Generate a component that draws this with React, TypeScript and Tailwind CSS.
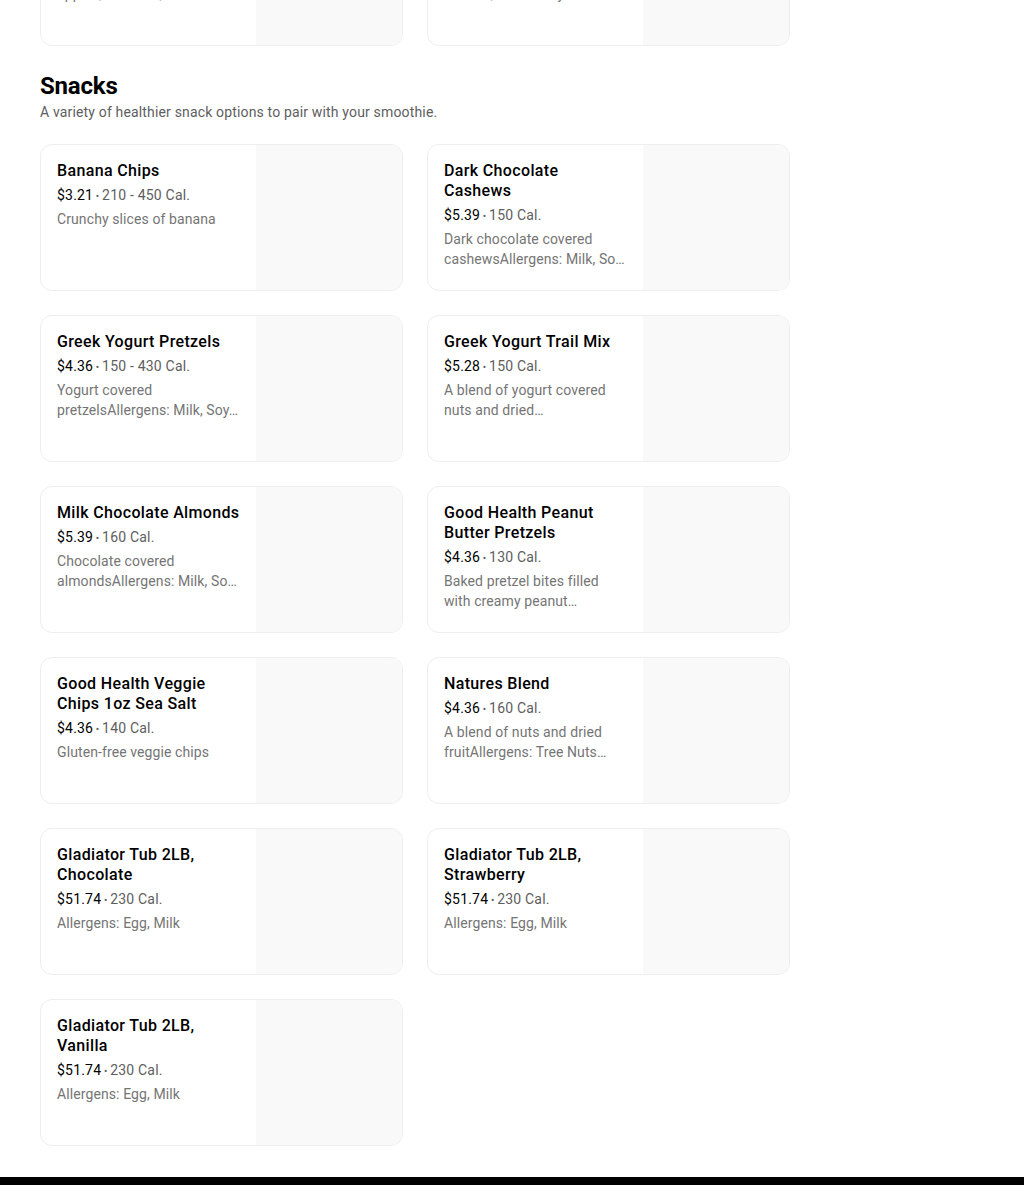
type Item = {
  name: string;
  price: string;
  cal: string;
  desc: string;
};

const snacks: Item[] = [
  { name: "Banana Chips", price: "$3.21", cal: "210 - 450 Cal.", desc: "Crunchy slices of banana" },
  { name: "Dark Chocolate Cashews", price: "$5.39", cal: "150 Cal.", desc: "Dark chocolate covered cashewsAllergens: Milk, Soy, Tree Nuts" },
  { name: "Greek Yogurt Pretzels", price: "$4.36", cal: "150 - 430 Cal.", desc: "Yogurt covered pretzelsAllergens: Milk, Soy, Wheat" },
  { name: "Greek Yogurt Trail Mix", price: "$5.28", cal: "150 Cal.", desc: "A blend of yogurt covered nuts and dried fruitsAllergens: Milk, Tree Nuts" },
  { name: "Milk Chocolate Almonds", price: "$5.39", cal: "160 Cal.", desc: "Chocolate covered almondsAllergens: Milk, Soy, Tree Nuts" },
  { name: "Good Health Peanut Butter Pretzels", price: "$4.36", cal: "130 Cal.", desc: "Baked pretzel bites filled with creamy peanut butterAllergens: Peanuts, Wheat" },
  { name: "Good Health Veggie Chips 1oz Sea Salt", price: "$4.36", cal: "140 Cal.", desc: "Gluten-free veggie chips" },
  { name: "Natures Blend", price: "$4.36", cal: "160 Cal.", desc: "A blend of nuts and dried fruitAllergens: Tree Nuts Peanuts" },
  { name: "Gladiator Tub 2LB, Chocolate", price: "$51.74", cal: "230 Cal.", desc: "Allergens: Egg, Milk" },
  { name: "Gladiator Tub 2LB, Strawberry", price: "$51.74", cal: "230 Cal.", desc: "Allergens: Egg, Milk" },
  { name: "Gladiator Tub 2LB, Vanilla", price: "$51.74", cal: "230 Cal.", desc: "Allergens: Egg, Milk" },
];

const previous: Item[] = [
  { name: "Acai Bowl", price: "$9.49", cal: "420 Cal.", desc: "Acai topped with granola, apples, bananas, strawberry and honey" },
  { name: "Pitaya Bowl", price: "$9.49", cal: "390 Cal.", desc: "Pitaya topped with granola, banana, strawberry and kiwi" },
];

function Card({ item }: { item: Item }) {
  return (
    <div className="flex h-[147px] overflow-hidden rounded-xl border border-[#eeeeee] bg-white">
      <div className="flex min-w-0 flex-1 flex-col gap-1 p-4">
        <div className="line-clamp-2 text-base font-medium leading-5 tracking-[0.35px] text-black">{item.name}</div>
        <div className="h-5 text-sm leading-5 tracking-[0.2px] text-[#5e5e5e]">
          <span className="text-black">{item.price}</span>
          <span className="text-[10px] leading-none"> • </span>
          <span>{item.cal}</span>
        </div>
        <div className="line-clamp-2 text-sm leading-5 tracking-[0.1px] text-[#757575]">{item.desc}</div>
      </div>
      <div className="w-[146px] shrink-0 bg-[#f9f9f9]" />
    </div>
  );
}

export default function App() {
  return (
    <div className="min-h-screen bg-white font-['Roboto',sans-serif]">
      <div className="px-10">
        {/* tail of the section above, scrolled off */}
        <div className="flex h-[46px] w-[750px] items-end overflow-hidden">
          <div className="grid w-full grid-cols-2 gap-6">
            {previous.map((item) => (
              <Card key={item.name} item={item} />
            ))}
          </div>
        </div>

        <section className="w-[750px] pt-[24px]">
          <h2 className="text-2xl font-bold leading-8 tracking-[-0.2px] text-black">Snacks</h2>
          <p className="text-sm leading-5 tracking-[0.16px] text-[#5e5e5e]">
            A variety of healthier snack options to pair with your smoothie.
          </p>
          <div className="mt-[22px] grid grid-cols-2 gap-6">
            {snacks.map((item) => (
              <Card key={item.name} item={item} />
            ))}
          </div>
        </section>
      </div>
      <div className="mt-[31px] h-2 bg-black" />
    </div>
  );
}
